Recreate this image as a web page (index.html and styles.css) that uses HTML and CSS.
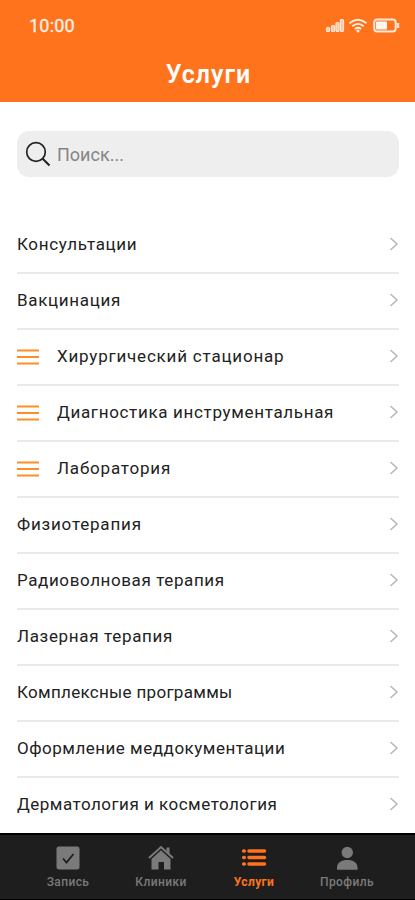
FILE: index.html
```html
<!DOCTYPE html>
<html lang="ru">
<head>
<meta charset="utf-8">
<meta name="viewport" content="width=device-width, initial-scale=1">
<title>Услуги</title>
<link rel="stylesheet" href="styles.css">
</head>
<body>
<svg class="defs" aria-hidden="true">
  <symbol id="chevron" viewBox="0 0 10 16"><path d="M1.500 2 8 8l-6.500 6" fill="none" stroke="currentColor" stroke-width="1.600"/></symbol>
  <symbol id="bars" viewBox="0 0 22 16"><path d="M0 2h22M0 8.500h22M0 15h22" fill="none" stroke="currentColor" stroke-width="2.200"/></symbol>
</svg>
<div class="app">
  <header class="header">
    <div class="status">
      <span class="time">10:00</span>
      <svg class="signals" width="76" height="18" viewBox="0 0 76 18" fill="none">
        <g fill="#ffc49e" stroke="#ffe9dc" stroke-width="1.200">
          <rect x="2.500" y="10.500" width="3" height="4" rx="1"/><rect x="7.500" y="8.500" width="3" height="6" rx="1"/>
          <rect x="12" y="5.500" width="3" height="9" rx="1"/><rect x="16.500" y="2.500" width="3" height="12" rx="1"/>
        </g>
        <g stroke="#fff1e8" stroke-width="1.800">
          <path d="M25.500 6.200q8.500-7 17 0M28.300 9.200q5.700-4.600 11.400 0M31 12q3-2.400 6 0"/>
        </g>
        <circle cx="34" cy="14" r="1.500" fill="#fff1e8"/>
        <rect x="50.200" y="2.500" width="21.500" height="12" rx="3" stroke="#ffe9dc" stroke-width="2"/>
        <rect x="52" y="4.500" width="11" height="8" rx="1" fill="#fff5ef"/>
        <path d="M74 6v5" stroke="#ffe0cc" stroke-width="2.400"/>
      </svg>
    </div>
    <h1 class="title">Услуги</h1>
  </header>
  <main class="main">
    <label class="search">
      <svg width="26" height="26" viewBox="0 0 26 26" fill="none" stroke="#222"><circle cx="11" cy="11" r="9.300" stroke-width="1.700"/><path d="m17.700 17.700 6.800 6.800" stroke-width="2"/></svg>
      <span class="placeholder">Поиск...</span>
    </label>
    <ul class="list">
      <li class="row"><span class="name track-wide">Консультации</span><svg class="chev"><use href="#chevron"/></svg></li>
      <li class="row"><span class="name track-wide">Вакцинация</span><svg class="chev"><use href="#chevron"/></svg></li>
      <li class="row"><svg class="bars"><use href="#bars"/></svg><span class="name track-wider">Хирургический стационар</span><svg class="chev"><use href="#chevron"/></svg></li>
      <li class="row"><svg class="bars"><use href="#bars"/></svg><span class="name track-wide">Диагностика инструментальная</span><svg class="chev"><use href="#chevron"/></svg></li>
      <li class="row"><svg class="bars"><use href="#bars"/></svg><span class="name track-wider">Лаборатория</span><svg class="chev"><use href="#chevron"/></svg></li>
      <li class="row"><span class="name track-wider">Физиотерапия</span><svg class="chev"><use href="#chevron"/></svg></li>
      <li class="row"><span class="name track-mid">Радиоволновая терапия</span><svg class="chev"><use href="#chevron"/></svg></li>
      <li class="row"><span class="name track-wide">Лазерная терапия</span><svg class="chev"><use href="#chevron"/></svg></li>
      <li class="row"><span class="name track-tight">Комплексные программы</span><svg class="chev"><use href="#chevron"/></svg></li>
      <li class="row"><span class="name">Оформление меддокументации</span><svg class="chev"><use href="#chevron"/></svg></li>
      <li class="row"><span class="name">Дерматология и косметология</span><svg class="chev"><use href="#chevron"/></svg></li>
    </ul>
  </main>
  <nav class="tabs">
    <a class="tab"><svg width="26" height="26" viewBox="0 0 26 26"><rect x="1.500" y="1.500" width="23" height="23" rx="2.500" fill="currentColor"/><path d="m8 13.500 3.500 4L18.500 9" fill="none" stroke="#1e1e1e" stroke-width="1.800"/></svg><span>Запись</span></a>
    <a class="tab"><svg width="26" height="26" viewBox="0 0 26 26"><path d="M1 13 13 2l12 11" fill="none" stroke="currentColor" stroke-width="2"/><path d="M18.500 2.500h3V9l-3-3zM3.500 14 13 5.300l9.500 8.700v10.500H16V17h-5.500v7.500h-7z" fill="currentColor"/></svg><span>Клиники</span></a>
    <a class="tab active"><svg width="26" height="26" viewBox="0 0 26 26" fill="none" stroke="currentColor" stroke-width="3.600" stroke-linecap="round"><path d="M2.700 6h.6M8 6h15.500M2.700 12.500h.6M8 12.500h15.500M2.700 19h.6M8 19h15.500"/></svg><span>Услуги</span></a>
    <a class="tab"><svg width="26" height="26" viewBox="0 0 26 26" fill="currentColor"><circle cx="13.300" cy="7.500" r="5.700"/><path d="M3 24.800v-2.300c0-5 4.500-7.500 10.300-7.500s10.200 2.500 10.200 7.500v2.300z"/></svg><span>Профиль</span></a>
  </nav>
</div>
</body>
</html>
```
FILE: styles.css
```css
* { box-sizing: border-box; }
body { margin: 0; background: #fff; font-family: Roboto, "Noto Sans", sans-serif; }
.defs { display: none; }
.app { width: 415px; height: 900px; display: flex; flex-direction: column; overflow: hidden; }
.header { height: 102px; flex: none; background: #ff731d; color: #fff; }
.status { display: flex; justify-content: space-between; align-items: center; padding: 17px 15px 0 29px; height: 35px; }
.time { font-size: 18px; line-height: 20px; margin-top: -1px; color: #fff1e8; letter-spacing: .2px; -webkit-text-stroke: .3px; }
.title { margin: 25px 0 0; font-size: 25px; line-height: 30px; font-weight: 600; text-align: center; letter-spacing: 1px; text-indent: 2px; }
.main { flex: 1; min-height: 0; padding: 29px 16px 0 17px; }
.search { display: flex; align-items: center; gap: 6px; height: 46px; padding-left: 8px; border-radius: 12px; background: #eee; }
.placeholder { font-size: 18px; color: #858585; }
.list { list-style: none; margin: 41px 0 0; padding: 0; }
.row { display: flex; align-items: center; height: 56px; padding-bottom: 2px; border-bottom: 2px solid #e9e9e9; }
.row:last-child { height: 55px; padding-bottom: 3px; border-bottom: 0; }
.name { flex: 1; font-size: 17px; line-height: 22px; color: #222; white-space: nowrap; letter-spacing: .5px; }
.track-tight { letter-spacing: .3px; }
.track-mid { letter-spacing: .6px; }
.track-wide { letter-spacing: .67px; }
.track-wider { letter-spacing: .8px; }
.bars { width: 22px; height: 17px; margin-right: 18px; color: #fc8f26; }
.chev { width: 10px; height: 16px; color: #bababa; }
.tabs { height: 67px; flex: none; display: grid; grid-template-columns: repeat(4, 93px); justify-content: center; padding-top: 10px; background: #1e1e1e; border-top: 2px solid #000; border-bottom: 1px solid #000; }
.tab { display: flex; flex-direction: column; align-items: center; gap: 4px; color: #7a7a7a; font-size: 12px; line-height: 15px; font-weight: 500; letter-spacing: .4px; }
.active { color: #ff731d; font-weight: 700; }
```
